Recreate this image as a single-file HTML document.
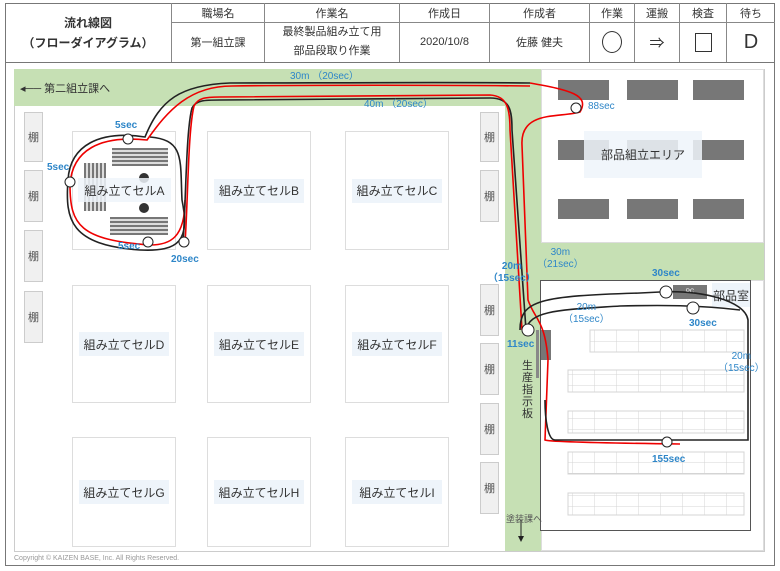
<!DOCTYPE html>
<html><head><meta charset="utf-8"><style>
*{margin:0;padding:0;box-sizing:border-box}
body{width:780px;height:571px;background:#fff;position:relative;overflow:hidden;font-family:"Liberation Sans","Noto Sans CJK JP",sans-serif;color:#333}
.a{position:absolute}
.hc{position:absolute;display:flex;align-items:center;justify-content:center;text-align:center;font-size:11px;border-right:1px solid #888}
.sh{position:absolute;width:19px;background:#f0f0f0;border:1px solid #ccc;font-size:11px;color:#555;display:flex;align-items:center;justify-content:center}
.cell{position:absolute;border:1.5px solid #ddd;background:#fff}
.cl{position:absolute;left:6px;right:6px;top:50%;height:24px;margin-top:-12px;background:#eef4fa;font-size:12px;color:#333;display:flex;align-items:center;justify-content:center}
.dk{position:absolute;width:51px;height:20px;background:#777}
.bl{position:absolute;color:#2e86c8;font-size:10px;font-weight:bold;line-height:12px;text-align:center}
</style></head><body>
<div class="a" style="left:5px;top:3px;width:770px;height:563px;border:1px solid #777"></div>
<div class="a" style="left:5px;top:62px;width:770px;border-top:1px solid #777"></div>
<div class="a" style="left:172px;top:22px;width:603px;border-top:1px solid #888"></div>
<div class="hc" style="left:5px;top:3px;width:167px;height:59px;font-weight:bold;font-size:12px;line-height:20px">流れ線図<br>（フローダイアグラム）</div>
<div class="hc" style="left:172px;top:3px;width:93px;height:19px">職場名</div>
<div class="hc" style="left:265px;top:3px;width:135px;height:19px">作業名</div>
<div class="hc" style="left:400px;top:3px;width:90px;height:19px">作成日</div>
<div class="hc" style="left:490px;top:3px;width:100px;height:19px">作成者</div>
<div class="hc" style="left:590px;top:3px;width:45px;height:19px">作業</div>
<div class="hc" style="left:635px;top:3px;width:45px;height:19px">運搬</div>
<div class="hc" style="left:680px;top:3px;width:47px;height:19px">検査</div>
<div class="hc" style="left:727px;top:3px;width:48px;height:19px;border-right:0">待ち</div>
<div class="hc" style="left:172px;top:22px;width:93px;height:40px">第一組立課</div>
<div class="hc" style="left:265px;top:22px;width:135px;height:40px;line-height:19px">最終製品組み立て用<br>部品段取り作業</div>
<div class="hc" style="left:400px;top:22px;width:90px;height:40px">2020/10/8</div>
<div class="hc" style="left:490px;top:22px;width:100px;height:40px">佐藤 健夫</div>
<div class="hc" style="left:590px;top:22px;width:45px;height:40px"><div style="width:20px;height:22px;border:1.5px solid #333;border-radius:50%"></div></div>
<div class="hc" style="left:635px;top:22px;width:45px;height:40px;font-size:15px">⇒</div>
<div class="hc" style="left:680px;top:22px;width:47px;height:40px"><div style="width:17px;height:19px;border:1.5px solid #333"></div></div>
<div class="hc" style="left:727px;top:22px;width:48px;height:40px;border-right:0;font-size:20px">D</div>

<div class="a" style="left:14px;top:69px;width:751px;height:483px;border:1px solid #ccc;background:#fff"></div>
<div class="a" style="left:14px;top:69px;width:527px;height:37px;background:#c6e0b4"></div>
<div class="a" style="left:505px;top:69px;width:36px;height:482px;background:#c6e0b4"></div>
<div class="a" style="left:541px;top:243px;width:223px;height:37px;background:#c6e0b4"></div>
<div class="a" style="left:541px;top:69px;width:223px;height:174px;border:1px solid #ddd;background:#fff"></div>
<div class="a" style="left:20px;top:80px;font-size:11px">◂── 第二組立課へ</div>

<div class="sh" style="left:24px;top:112px;height:50px">棚</div>
<div class="sh" style="left:24px;top:170px;height:52px">棚</div>
<div class="sh" style="left:24px;top:230px;height:52px">棚</div>
<div class="sh" style="left:24px;top:291px;height:52px">棚</div>
<div class="sh" style="left:480px;top:112px;height:50px">棚</div>
<div class="sh" style="left:480px;top:170px;height:52px">棚</div>
<div class="sh" style="left:480px;top:284px;height:52px">棚</div>
<div class="sh" style="left:480px;top:343px;height:52px">棚</div>
<div class="sh" style="left:480px;top:403px;height:52px">棚</div>
<div class="sh" style="left:480px;top:462px;height:52px">棚</div>

<div class="cell" style="left:72px;top:131px;width:104px;height:119px"></div>
<div class="cell" style="left:207px;top:131px;width:104px;height:119px"><div class="cl">組み立てセルB</div></div>
<div class="cell" style="left:345px;top:131px;width:104px;height:119px"><div class="cl">組み立てセルC</div></div>
<div class="cell" style="left:72px;top:285px;width:104px;height:118px"><div class="cl">組み立てセルD</div></div>
<div class="cell" style="left:207px;top:285px;width:104px;height:118px"><div class="cl">組み立てセルE</div></div>
<div class="cell" style="left:345px;top:285px;width:104px;height:118px"><div class="cl">組み立てセルF</div></div>
<div class="cell" style="left:72px;top:437px;width:104px;height:110px"><div class="cl">組み立てセルG</div></div>
<div class="cell" style="left:207px;top:437px;width:104px;height:110px"><div class="cl">組み立てセルH</div></div>
<div class="cell" style="left:345px;top:437px;width:104px;height:110px"><div class="cl">組み立てセルI</div></div>
<div class="a" style="left:112px;top:148px;width:56px;height:18px;background:repeating-linear-gradient(#777 0 2px,#ddd 2px 4px)"></div>
<div class="a" style="left:110px;top:217px;width:58px;height:18px;background:repeating-linear-gradient(#777 0 2px,#ddd 2px 4px)"></div>
<div class="a" style="left:84px;top:163px;width:22px;height:48px;background:repeating-linear-gradient(90deg,#777 0 2px,#ddd 2px 4px)"></div>
<div class="a" style="left:139px;top:173px;width:10px;height:10px;border-radius:50%;background:#333"></div>
<div class="a" style="left:139px;top:203px;width:10px;height:10px;border-radius:50%;background:#333"></div>
<div class="a" style="left:78px;top:178px;width:93px;height:24px;background:rgba(238,244,250,.85);font-size:12px;display:flex;align-items:center;justify-content:center">組み立てセルA</div>

<div class="dk" style="left:558px;top:80px"></div><div class="dk" style="left:627px;top:80px"></div><div class="dk" style="left:693px;top:80px"></div>
<div class="dk" style="left:558px;top:140px"></div><div class="dk" style="left:627px;top:140px"></div><div class="dk" style="left:693px;top:140px"></div>
<div class="dk" style="left:558px;top:199px"></div><div class="dk" style="left:627px;top:199px"></div><div class="dk" style="left:693px;top:199px"></div>
<div class="a" style="left:584px;top:131px;width:118px;height:47px;background:rgba(238,244,250,.85);font-size:12px;display:flex;align-items:center;justify-content:center">部品組立エリア</div>

<div class="a" style="left:541px;top:280px;width:223px;height:271px;border:1px solid #ddd"></div>
<div class="a" style="left:540px;top:280px;width:211px;height:251px;border:1.5px solid #555;background:#fff"></div>
<div class="a" style="left:712px;top:283px;width:38px;height:24px;background:#eef4fa;font-size:12px;display:flex;align-items:center;justify-content:center">部品室</div>
<div class="a" style="left:673px;top:285px;width:34px;height:14px;background:#777;color:#fff;font-size:6px;text-align:center;line-height:14px">PC</div>
<div class="a" style="left:541px;top:330px;width:10px;height:30px;background:#777"></div>
<div class="a" style="left:536px;top:330px;width:3px;height:48px;background:#888"></div>
<svg class="a" style="left:0;top:0" width="780" height="571">
<defs><pattern id="g" width="22" height="11" patternUnits="userSpaceOnUse"><path d="M0 0H22M0 0V11" stroke="#d4d4d4" fill="none"/></pattern></defs>
<rect x="590" y="330" width="154" height="22" fill="url(#g)" stroke="#d4d4d4"/>
<rect x="568" y="370" width="176" height="22" fill="url(#g)" stroke="#d4d4d4"/>
<rect x="568" y="411" width="176" height="22" fill="url(#g)" stroke="#d4d4d4"/>
<rect x="568" y="452" width="176" height="22" fill="url(#g)" stroke="#d4d4d4"/>
<rect x="568" y="493" width="176" height="22" fill="url(#g)" stroke="#d4d4d4"/>
<g fill="none" stroke-width="1.6">
<path d="M530 83 C460 82 300 83 230 83 C180 85 160 100 145 137 C100 130 70 145 68 180 C65 220 70 245 140 250 C180 252 190 240 182 200 C180 160 185 140 150 137" stroke="#222"/>
<path d="M530 86 C450 85 300 85 232 86 C190 86 168 110 147 140 C100 135 72 150 70 185 C70 225 80 240 150 245 C170 245 185 238 185 200" stroke="#e00"/>
<path d="M183 243 C186 200 186 130 192 108 C196 100 205 100 220 100 L490 98 C510 98 512 110 512 130 L526 330" stroke="#222"/>
<path d="M185 243 C188 200 188 130 194 106 C198 98 205 97 220 97 L490 95 C508 96 510 110 510 130 L522 330" stroke="#e00"/>
<path d="M530 83 C570 90 590 95 580 112 C560 118 520 110 522 145 L528 300 C535 320 545 320 548 360 L545 440 C550 442 600 443 680 444" stroke="#e00"/>
<path d="M520 330 C520 300 540 296 640 293 L660 292 C700 290 745 300 748 320 L748 440 L555 440 C548 440 545 420 545 400" stroke="#222"/>
<path d="M526 330 C530 310 560 310 620 306 C660 305 700 305 740 310" stroke="#222"/>
</g>
<g fill="#fff" stroke="#222">
<circle cx="128" cy="139" r="5"/><circle cx="70" cy="182" r="5"/><circle cx="148" cy="242" r="5"/><circle cx="184" cy="242" r="5"/>
<circle cx="576" cy="108" r="5"/><circle cx="528" cy="330" r="6"/><circle cx="666" cy="292" r="6"/><circle cx="693" cy="308" r="6"/><circle cx="667" cy="442" r="5"/>
</g>
<path d="M521 520 L521 540" stroke="#222"/><path d="M518 536 L521 542 L524 536Z" fill="#222"/>
</svg>
<div class="a" style="left:506px;top:512px;font-size:9px;color:#555">塗装課へ</div>
<div class="a" style="left:522px;top:360px;width:12px;font-size:11px;line-height:12px">生産指示板</div>

<div class="bl" style="left:290px;top:71px;font-weight:normal">30m （20sec）</div>
<div class="bl" style="left:364px;top:99px;font-weight:normal">40m （20sec）</div>
<div class="bl" style="left:115px;top:120px">5sec</div>
<div class="bl" style="left:47px;top:162px">5sec</div>
<div class="bl" style="left:118px;top:241px">5sec</div>
<div class="bl" style="left:171px;top:254px">20sec</div>
<div class="bl" style="left:588px;top:101px;font-weight:normal">88sec</div>
<div class="bl" style="left:537px;top:247px;font-weight:normal">30m<br>（21sec）</div>
<div class="bl" style="left:488px;top:261px">20m<br>（15sec）</div>
<div class="bl" style="left:652px;top:268px">30sec</div>
<div class="bl" style="left:563px;top:302px;font-weight:normal">20m<br>（15sec）</div>
<div class="bl" style="left:689px;top:318px">30sec</div>
<div class="bl" style="left:507px;top:339px">11sec</div>
<div class="bl" style="left:718px;top:351px;font-weight:normal">20m<br>（15sec）</div>
<div class="bl" style="left:652px;top:454px">155sec</div>
<div class="a" style="left:14px;top:555px;font-size:7px;color:#999">Copyright © KAIZEN BASE, Inc. All Rights Reserved.</div>
</body></html>
